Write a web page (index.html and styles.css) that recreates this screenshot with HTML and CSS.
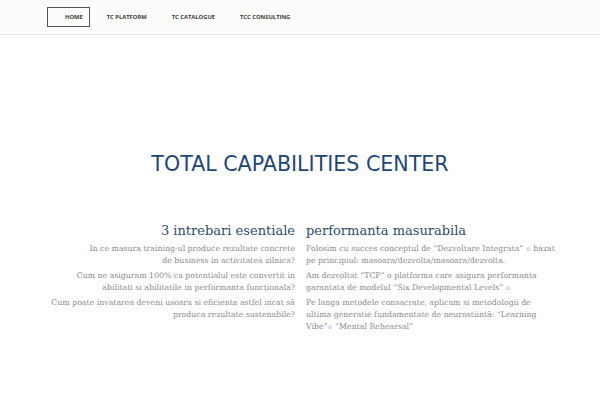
FILE: index.html
```html
<!DOCTYPE html>
<html>
<head>
<meta charset="utf-8">
<link rel="stylesheet" href="styles.css">
</head>
<body>
<header class="top">
  <nav class="nav">
    <a class="nav-item active">HOME</a>
    <a class="nav-item">TC PLATFORM</a>
    <a class="nav-item">TC CATALOGUE</a>
    <a class="nav-item">TCC CONSULTING</a>
  </nav>
</header>
<main class="main">
  <h1 class="title">TOTAL CAPABILITIES CENTER</h1>
  <section class="cols">
    <div class="col col-left">
      <h2 class="col-head">3 intrebari esentiale</h2>
      <p>In ce masura training-ul produce rezultate concrete<br>de business in activitatea zilnica?</p>
      <p>Cum ne asiguram 100% ca potentialul este convertit in abilitati si abilitatile in performanta funcționala?</p>
      <p>Cum poate invatarea deveni usoara si eficienta astfel incat să produca rezultate sustenabile?</p>
    </div>
    <div class="col col-right">
      <h2 class="col-head">performanta masurabila</h2>
      <p>Folosim cu succes conceptul de “Dezvoltare Integrata” <span class="mark">©</span> bazat pe principiul: masoara/dezvolta/masoara/dezvolta.</p>
      <p>Am dezvoltat “TCP” o platforma care asigura performanta garantata de modelul “Six Developmental Levels” <span class="mark">©</span></p>
      <p>Pe langa metodele consacrate, aplicam si metodologii de ultima generatie fundamentate de neurostiintă: “Learning Vibe”<span class="mark">©</span> “Mental Rehearsal”</p>
    </div>
  </section>
</main>
</body>
</html>
```
FILE: styles.css
```css
html, body {
  margin: 0;
  padding: 0;
  background: #fff;
}
.top {
  height: 34px;
  background: #fcfcfb;
  border-bottom: 1px solid #e3e3e3;
  display: flex;
  align-items: center;
}
.nav {
  display: flex;
  align-items: center;
  gap: 25px;
  margin-left: 47px;
  font-family: "Open Sans", sans-serif;
  font-weight: 700;
  font-size: 5.8px;
  color: #3a3a3a;
}
.nav-item {
  display: block;
  line-height: 18px;
}
.nav-item.active {
  border: 1px solid #555;
  padding: 0 6px 0 17px;
  margin-right: -8px;
}
.main {
  padding-top: 117px;
}
.title {
  margin: 0;
  text-align: center;
  font-family: "DejaVu Sans", sans-serif;
  font-weight: 400;
  font-size: 20.6px;
  line-height: 24px;
  color: #1f4775;
}
.cols {
  display: flex;
  gap: 11px;
  margin-top: 47px;
  margin-left: 45px;
  font-family: "DejaVu Serif", serif;
}
.col {
  width: 250px;
}
.col-right {
  width: 252px;
}
.col-left {
  text-align: right;
}
.col-head {
  margin: 0 0 4px;
  font-weight: 400;
  font-size: 13px;
  line-height: 16px;
  color: #2f4b6c;
}
.col p {
  margin: 0 0 3px;
  font-size: 7.8px;
  line-height: 12px;
  color: #8a8a8a;
}
.mark {
  font-size: 5px;
  color: #7a9cc8;
}
```
